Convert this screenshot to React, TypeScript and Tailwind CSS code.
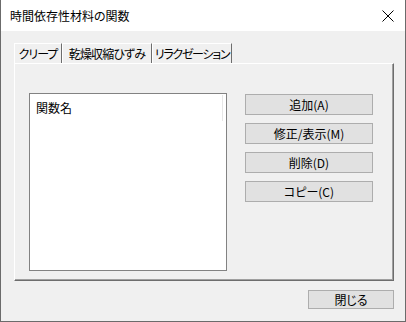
import React from "react";

const font = {
  fontFamily: '"Noto Sans CJK JP", "Noto Sans", sans-serif',
};

function Btn({ label, className = "" }: { label: string; className?: string }) {
  return (
    <div
      className={
        "flex items-center justify-center bg-[#e1e1e1] border border-[#adadad] text-[12px] text-black leading-none whitespace-nowrap " +
        className
      }
    >
      {label}
    </div>
  );
}

function Tab({ label, className = "" }: { label: string; className?: string }) {
  return (
    <div
      className={
        "flex items-center justify-center border-l border-t border-white border-r border-r-[#6d6d6d] text-[12px] leading-none text-black whitespace-nowrap " +
        className
      }
    >
      {label}
    </div>
  );
}

export default function App() {
  return (
    <div
      className="w-[406px] h-[322px] flex flex-col border-x border-b border-[#6b6b6b] bg-[#f0f0f0] [font-feature-settings:'palt'] overflow-hidden"
      style={font}
    >
      {/* title bar */}
      <div className="h-[31px] bg-white flex items-center justify-between pl-[9px] pr-[11px]">
        <span className="text-[12px] text-black leading-none whitespace-nowrap">時間依存性材料の関数</span>
        <svg width="12" height="12" viewBox="0 0 12 12">
          <path d="M0.5 0.5 L11.5 11.5 M11.5 0.5 L0.5 11.5" stroke="#000" strokeWidth="1" />
        </svg>
      </div>

      {/* body */}
      <div className="flex-1 flex flex-col pl-[13px] pt-[12px]">
        {/* tabs */}
        <div className="h-[20px] flex items-stretch">
          <Tab label="クリープ" className="w-[48px] tracking-[-1px]" />
          <Tab label="乾燥収縮ひずみ" className="w-[90px] tracking-[-0.8px]" />
          <Tab label="リラクゼーション" className="w-[80px] tracking-[-1.3px]" />
        </div>

        {/* panel */}
        <div className="w-[380px] h-[218px] border-l border-t border-white border-r border-b border-r-[#6d6d6d] border-b-[#6d6d6d] shadow-[inset_-1px_-1px_0_#a0a0a0] flex items-start pl-[14px] pt-[29px]">
          <div className="relative w-[198px] h-[178px] bg-white border border-[#828282] pl-[6px] pt-[8px] leading-none">
            <div className="text-[12px] leading-none text-black">関数名</div>
            <div className="absolute right-[3px] top-[1px] w-px h-[26px] bg-[#e6e6e6]" />
          </div>
          <div className="ml-[18px] mt-[1px] flex flex-col gap-[8px]">
            <Btn label="追加(A)" className="w-[128px] h-[21px]" />
            <Btn label="修正/表示(M)" className="w-[128px] h-[21px]" />
            <Btn label="削除(D)" className="w-[128px] h-[21px]" />
            <Btn label="コピー(C)" className="w-[128px] h-[21px]" />
          </div>
        </div>

        {/* footer */}
        <div className="w-[380px] flex justify-end mt-[9px]">
          <Btn label="閉じる" className="w-[86px] h-[19px]" />
        </div>
      </div>
    </div>
  );
}
